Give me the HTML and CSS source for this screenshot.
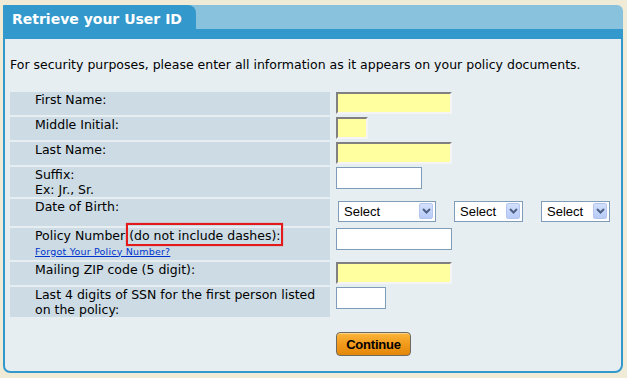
FILE: index.html
```html
<!DOCTYPE html>
<html lang="en">
<head>
    <meta charset="UTF-8">
    <meta name="viewport" content="width=device-width, initial-scale=1.0">
    <title>Retrieve your User ID</title>
    <link rel="stylesheet" href="styles.css">
</head>
<body>
    <div class="panel">
        <div class="panel-head">
            <h1 class="tab">Retrieve your User ID</h1>
        </div>
        <div class="panel-body">
            <p class="intro">For security purposes, please enter all information as it appears on your policy documents.</p>
            <form id="retrieveForm">
                <table class="form-table">
                    <tr>
                        <td class="label">First Name:</td>
                        <td class="field"><input type="text" class="required w-116"></td>
                    </tr>
                    <tr>
                        <td class="label">Middle Initial:</td>
                        <td class="field"><input type="text" class="required w-32"></td>
                    </tr>
                    <tr>
                        <td class="label">Last Name:</td>
                        <td class="field"><input type="text" class="required w-116"></td>
                    </tr>
                    <tr>
                        <td class="label">Suffix:<br>Ex: Jr., Sr.</td>
                        <td class="field"><input type="text" class="w-86"></td>
                    </tr>
                    <tr>
                        <td class="label">Date of Birth:</td>
                        <td class="field">
                            <div class="date-group">
                                <div class="select-wrap month">
                                    <select><option>Select</option></select>
                                    <span class="select-arrow"><svg width="9" height="6" viewBox="0 0 9 6"><path d="M1 1 L4.5 4.5 L8 1" fill="none" stroke="#4d6185" stroke-width="2"/></svg></span>
                                </div>
                                <div class="select-wrap day">
                                    <select><option>Select</option></select>
                                    <span class="select-arrow"><svg width="9" height="6" viewBox="0 0 9 6"><path d="M1 1 L4.5 4.5 L8 1" fill="none" stroke="#4d6185" stroke-width="2"/></svg></span>
                                </div>
                                <div class="select-wrap year">
                                    <select><option>Select</option></select>
                                    <span class="select-arrow"><svg width="9" height="6" viewBox="0 0 9 6"><path d="M1 1 L4.5 4.5 L8 1" fill="none" stroke="#4d6185" stroke-width="2"/></svg></span>
                                </div>
                            </div>
                        </td>
                    </tr>
                    <tr>
                        <td class="label">Policy Number <span class="highlight">(do not include dashes):</span><br>
                            <a href="#" class="small-link">Forgot Your Policy Number?</a>
                        </td>
                        <td class="field"><input type="text" class="w-116"></td>
                    </tr>
                    <tr>
                        <td class="label">Mailing ZIP code (5 digit):</td>
                        <td class="field"><input type="text" class="required w-116"></td>
                    </tr>
                    <tr>
                        <td class="label">Last 4 digits of SSN for the first person listed on the policy:</td>
                        <td class="field"><input type="text" class="w-50"></td>
                    </tr>
                </table>
                <div class="actions">
                    <button type="submit" class="btn-continue">Continue</button>
                </div>
            </form>
        </div>
    </div>
</body>
</html>
```

FILE: styles.css
```css
:root {
    --page-bg: #efebd6;
    --blue-dark: #3399cc;
    --blue-light: #89c2dd;
    --body-bg: #e6eef2;
    --label-bg: #ccdbe4;
    --field-border: #7f9db9;
    --required-bg: #ffff9f;
}

body {
    margin: 0;
    background: var(--page-bg);
    font-family: 'DejaVu Sans', Verdana, sans-serif;
    font-size: 12.5px;
    color: #000;
}

.panel {
    width: 620px;
    margin: 5px 0 0 3px;
}

.panel-head {
    display: flex;
    height: 24px;
    background: var(--blue-light);
    border-radius: 1px 6px 0 0;
}

.tab {
    width: 193px;
    margin: 0;
    padding: 5px 0 0 9px;
    box-sizing: border-box;
    background: var(--blue-dark);
    border-radius: 1px 8px 0 0;
    color: #fff;
    font-size: 14px;
    font-weight: bold;
    line-height: 18px;
}

.panel-body {
    background: var(--body-bg);
    border: 2px solid var(--blue-dark);
    border-top-width: 10px;
    border-radius: 0 0 8px 7px;
    padding: 18px 5px 15px 5px;
}

.intro {
    margin: 0 0 18px 0;
    line-height: 15px;
}

.form-table {
    border-collapse: separate;
    border-spacing: 0 2px;
}

.form-table td {
    vertical-align: top;
    padding: 0;
}

.form-table td.label {
    width: 295px;
    padding: 1px 0 0 25px;
    background: var(--label-bg);
    line-height: 14.5px;
}

.form-table td.field {
    padding-left: 6px;
}

.field input {
    display: block;
    height: 22px;
    box-sizing: border-box;
    margin: 0 0 1px 0;
    border: 1px solid var(--field-border);
    background: #fff;
    font-family: 'Liberation Sans', Arial, sans-serif;
    font-size: 13px;
}

.field input.required {
    background: var(--required-bg);
    border-width: 2px;
    border-style: solid;
    border-color: #808080 #f4f4f4 #f4f4f4 #808080;
}

.w-116 { width: 116px; }
.w-86 { width: 86px; }
.w-50 { width: 50px; }
.w-32 { width: 32px; }

.highlight {
    position: relative;
    display: inline-block;
}

.highlight::after {
    content: '';
    position: absolute;
    top: -6px;
    left: -3px;
    right: -2px;
    bottom: -2px;
    border: 2px solid #e41a1a;
    box-shadow: 0 0 1px rgba(228, 26, 26, 0.6);
}

.small-link {
    display: inline-block;
    padding-bottom: 1px;
    color: #0033cc;
    font-size: 9.5px;
    letter-spacing: 0.2px;
}

.date-group {
    display: flex;
    gap: 18px;
    margin: 2px 0 4px 2px;
}

.select-wrap {
    position: relative;
    height: 21px;
}

.select-wrap.month { width: 98px; }
.select-wrap.day { width: 69px; }
.select-wrap.year { width: 69px; }

.select-wrap select {
    appearance: none;
    -webkit-appearance: none;
    width: 100%;
    height: 21px;
    margin: 0;
    padding: 0 0 0 5px;
    border: 1px solid var(--field-border);
    border-radius: 0;
    background: #fff;
    font-family: 'Liberation Sans', Arial, sans-serif;
    font-size: 13px;
    color: #000;
}

.select-arrow {
    position: absolute;
    top: 2px;
    right: 3px;
    width: 14px;
    height: 16px;
    display: flex;
    align-items: center;
    justify-content: center;
    background: linear-gradient(180deg, #d3e0fd 0%, #b7cbf7 100%);
    border: 1px solid #b4c6f0;
    border-radius: 2px;
    box-sizing: border-box;
    pointer-events: none;
}

.actions {
    margin-top: 13px;
    padding-left: 326px;
}

.btn-continue {
    width: 75px;
    height: 24px;
    padding: 0;
    border: 1px solid #6f6a60;
    border-radius: 4px;
    background: linear-gradient(180deg, #fbb63a 0%, #f29a1c 50%, #e3870a 100%);
    box-shadow: inset 0 1px 0 rgba(255, 255, 255, 0.4);
    color: #000;
    font-family: 'Liberation Sans', Arial, sans-serif;
    font-size: 13px;
    font-weight: bold;
    letter-spacing: -0.2px;
    cursor: pointer;
}
```
